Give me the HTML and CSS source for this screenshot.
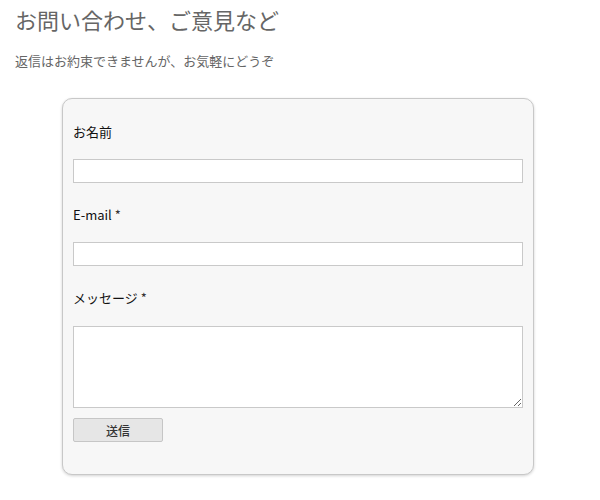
FILE: index.html
```html
<!DOCTYPE html>
<html lang="ja">
<head>
<meta charset="utf-8">
<link rel="stylesheet" href="styles.css">
</head>
<body>
<div class="page">
  <h1 class="title">お問い合わせ、ご意見など</h1>
  <p class="lead">返信はお約束できませんが、お気軽にどうぞ</p>
  <form class="card">
    <label class="label">お名前</label>
    <input class="field" type="text">
    <label class="label">E-mail <span class="req">*</span></label>
    <input class="field" type="text">
    <label class="label">メッセージ <span class="req">*</span></label>
    <textarea class="field area"></textarea>
    <button class="send" type="button">送信</button>
  </form>
</div>
</body>
</html>
```
FILE: styles.css
```css
html, body {
  margin: 0;
  padding: 0;
  background: #ffffff;
}
.page {
  padding: 4px 15px 20px 15px;
  font-family: "Noto Sans CJK JP", "Noto Sans", sans-serif;
}
.title {
  margin: 0;
  font-size: 22px;
  font-weight: 400;
  line-height: 30px;
  color: #666666;
}
.lead {
  margin: 17px 0 0 0;
  font-size: 13px;
  line-height: 20px;
  color: #666666;
}
.card {
  margin: 27px 0 0 47px;
  width: 450px;
  padding: 23px 10px 32px 10px;
  background: #f7f7f7;
  border: 1px solid #c8c8c8;
  border-radius: 10px;
  box-shadow: 0 1px 3px rgba(0,0,0,0.18);
  display: flex;
  flex-direction: column;
}
.label {
  font-size: 13px;
  line-height: 20px;
  color: #111111;
}
.req {
  color: #333;
}
.field {
  box-sizing: border-box;
  width: 450px;
  height: 24px;
  margin: 17px 0 22px 0;
  border: 1px solid #c9c9c9;
  background: #ffffff;
  padding: 2px 4px;
  font-family: inherit;
  outline: none;
}
.area {
  height: 82px;
  margin-top: 18px;
  margin-bottom: 10px;
  resize: vertical;
}
.send {
  box-sizing: border-box;
  width: 90px;
  height: 24px;
  background: #e6e6e6;
  border: 1px solid #c6c6c6;
  border-radius: 2px;
  font-family: inherit;
  font-size: 12px;
  font-weight: 500;
  color: #333333;
  padding: 0;
}
```
